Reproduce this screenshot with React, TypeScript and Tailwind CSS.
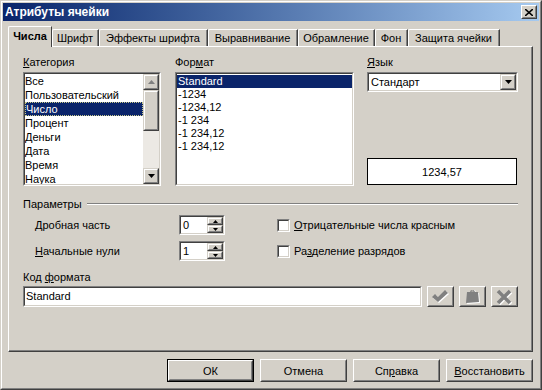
import React from 'react';

const cats = ['Все', 'Пользовательский', 'Число', 'Процент', 'Деньги', 'Дата', 'Время', 'Наука'];
const formats = ['Standard', '-1234', '-1234,12', '-1 234', '-1 234,12', '-1 234,12'];
const tabs = [
  { name: 'Числа', w: 'w-[44px]' },
  { name: 'Шрифт', w: 'w-[47px]' },
  { name: 'Эффекты шрифта', w: 'w-[109px]' },
  { name: 'Выравнивание', w: 'w-[90px]' },
  { name: 'Обрамление', w: 'w-[77px]' },
  { name: 'Фон', w: 'w-[33px]' },
  { name: 'Защита ячейки', w: 'w-[92px]' },
];

function Raised({ className = '', children }: { className?: string; children?: React.ReactNode }) {
  return (
    <div className={`border border-t-white border-l-white border-r-[#404040] border-b-[#404040] bg-[#d4d0c8] ${className}`}>
      <div className="w-full h-full border border-t-[#d4d0c8] border-l-[#d4d0c8] border-r-[#808080] border-b-[#808080] flex items-center justify-center">
        {children}
      </div>
    </div>
  );
}

function ScrollBtn({ className = '', children }: { className?: string; children?: React.ReactNode }) {
  return (
    <div className={`border border-t-[#d4d0c8] border-l-[#d4d0c8] border-r-[#404040] border-b-[#404040] bg-[#d4d0c8] ${className}`}>
      <div className="w-full h-full border border-t-white border-l-white border-r-[#808080] border-b-[#808080] flex items-center justify-center">
        {children}
      </div>
    </div>
  );
}

function Sunken({ className = '', inner = '', children }: { className?: string; inner?: string; children?: React.ReactNode }) {
  return (
    <div className={`border border-t-[#808080] border-l-[#808080] border-r-white border-b-white ${className}`}>
      <div className={`w-full h-full border border-t-[#404040] border-l-[#404040] border-r-[#d4d0c8] border-b-[#d4d0c8] bg-white ${inner}`}>
        {children}
      </div>
    </div>
  );
}

function Arrow({ up, color = '#000', small }: { up?: boolean; color?: string; small?: boolean }) {
  const w = small ? 5 : 7;
  const h = small ? 3 : 4;
  const pts = up ? `0,${h} ${w},${h} ${w / 2},0` : `0,0 ${w},0 ${w / 2},${h}`;
  return (
    <svg width={w} height={h} viewBox={`0 0 ${w} ${h}`}>
      <polygon points={pts} fill={color} />
    </svg>
  );
}

function Spin({ value }: { value: string }) {
  return (
    <Sunken className="w-[46px] h-[20px]" inner="flex">
      <div className="flex-1 pl-[2px] leading-[16px]">{value}</div>
      <div className="w-[16px] flex flex-col">
        <ScrollBtn className="h-[8px]">
          <Arrow up small />
        </ScrollBtn>
        <ScrollBtn className="h-[8px]">
          <Arrow small />
        </ScrollBtn>
      </div>
    </Sunken>
  );
}

function Check({ label }: { label: React.ReactNode }) {
  return (
    <div className="flex items-center gap-[4px]">
      <Sunken className="w-[13px] h-[13px]" />
      <span>{label}</span>
    </div>
  );
}

export default function App() {
  return (
    <div className="w-[542px] h-[390px] border border-t-[#d4d0c8] border-l-[#d4d0c8] border-r-[#404040] border-b-[#404040] bg-[#d4d0c8] text-[11px] leading-[14px] text-black font-['Liberation_Sans',Arial,sans-serif]">
      <div className="w-full h-full border border-t-white border-l-white border-r-[#808080] border-b-[#808080] p-[1px] flex flex-col">
        {/* title bar */}
        <div className="h-[18px] bg-linear-to-r from-[#0a246a] to-[#a6caf0] flex items-center justify-between pl-[2px] pr-[2px]">
          <span className="text-white font-bold text-[12px]">Атрибуты ячейки</span>
          <Raised className="w-[16px] h-[14px]">
            <svg width="8" height="7" viewBox="0 0 8 7">
              <path d="M0 0 L8 7 M8 0 L0 7" stroke="#000" strokeWidth="1.6" />
            </svg>
          </Raised>
        </div>

        <div className="flex-1 pl-[5px] pr-[5px] pt-[5px] flex flex-col">
          {/* tabs */}
          <div className="h-[20px] flex items-end">
            {tabs.map((t, i) =>
              i === 0 ? (
                <div
                  key={t.name}
                  className={`${t.w} h-[21px] -mb-[1px] relative z-10 bg-[#d4d0c8] border-t border-l border-r border-t-white border-l-white border-r-[#404040] rounded-tl-[2px] flex items-center justify-center font-bold pb-[2px]`}
                >
                  {t.name}
                </div>
              ) : (
                <div
                  key={t.name}
                  className={`${t.w} h-[17px] border-t border-l border-r border-t-white border-l-white border-r-[#404040] rounded-tl-[2px] flex items-center justify-center`}
                >
                  <div className="w-full h-full border-r border-r-[#808080] flex items-center justify-center">{t.name}</div>
                </div>
              )
            )}
          </div>

          {/* panel */}
          <div className="w-[525px] h-[306px] border border-t-white border-l-white border-r-[#404040] border-b-[#404040]">
            <div className="w-full h-full border-r border-b border-r-[#808080] border-b-[#808080] pl-[14px] pt-[8px]">
              <div className="flex">
                <div className="w-[138px]">
                  <div className="h-[14px] mb-[3px]">
                    <u>К</u>атегория
                  </div>
                  <Sunken className="w-[138px] h-[114px]" inner="flex">
                    <div className="flex-1 overflow-hidden">
                      {cats.map((c) => (
                        <div
                          key={c}
                          className={c === 'Число' ? 'h-[14px] leading-[12px] bg-[#0a246a] text-white border border-dotted border-[#c8c88a]' : 'h-[14px] leading-[14px]'}
                        >
                          {c}
                        </div>
                      ))}
                    </div>
                    <div className="w-[16px] flex flex-col bg-[#ece9e4]">
                      <ScrollBtn className="h-[16px]">
                        <Arrow up color="#808080" />
                      </ScrollBtn>
                      <ScrollBtn className="h-[41px]" />
                      <div className="flex-1" />
                      <ScrollBtn className="h-[16px]">
                        <Arrow />
                      </ScrollBtn>
                    </div>
                  </Sunken>
                </div>

                <div className="w-[179px] ml-[14px]">
                  <div className="h-[14px] mb-[3px]">
                    Фор<u>м</u>ат
                  </div>
                  <Sunken className="w-[179px] h-[114px]" inner="overflow-hidden pt-[1px]">
                    {formats.map((f, i) => (
                      <div
                        key={i}
                        className={i === 0 ? 'h-[13px] leading-[13px] pl-[1px] bg-[#0a246a] text-white' : 'h-[13px] leading-[13px] pl-[1px]'}
                      >
                        {f}
                      </div>
                    ))}
                  </Sunken>
                </div>

                <div className="w-[151px] ml-[13px]">
                  <div className="h-[14px] mb-[3px]">
                    <u>Я</u>зык
                  </div>
                  <Sunken className="w-[151px] h-[20px]" inner="flex">
                    <div className="flex-1 pl-[2px] leading-[16px]">Стандарт</div>
                    <ScrollBtn className="w-[16px] h-[16px]">
                      <Arrow />
                    </ScrollBtn>
                  </Sunken>
                  <div className="mt-[66px] w-[150px] h-[27px] border border-black bg-white flex items-center justify-center">
                    1234,57
                  </div>
                </div>
              </div>

              {/* parameters */}
              <div className="mt-[11px] w-[495px] h-[14px] flex items-center gap-[5px]">
                <span>Параметры</span>
                <div className="flex-1 border-t border-b border-t-[#808080] border-b-white" />
              </div>

              <div className="mt-[4px] h-[20px] flex items-center">
                <div className="w-[156px] pl-[12px]">
                  <u>Д</u>робная часть
                </div>
                <Spin value="0" />
                <div className="ml-[52px]">
                  <Check label={<><u>О</u>трицательные числа красным</>} />
                </div>
              </div>
              <div className="mt-[6px] h-[20px] flex items-center">
                <div className="w-[156px] pl-[12px]">
                  <u>Н</u>ачальные нули
                </div>
                <Spin value="1" />
                <div className="ml-[52px]">
                  <Check label={<>Ра<u>з</u>деление разрядов</>} />
                </div>
              </div>

              <div className="mt-[9px] h-[14px]">
                Код <u>ф</u>ормата
              </div>
              <div className="mt-[2px] flex items-center gap-[5px]">
                <Sunken className="w-[399px] h-[21px]">
                  <div className="pl-[1px] leading-[17px]">Standard</div>
                </Sunken>
                <Raised className="w-[27px] h-[21px]">
                  <svg width="19" height="15" viewBox="0 0 19 15">
                    <path d="M2 9 L5 6 L8 9 L15 2 L18 5 L8 14 Z" fill="#fff" />
                    <path d="M1 8 L4 5 L7 8 L14 1 L17 4 L7 13 Z" fill="#808080" />
                  </svg>
                </Raised>
                <Raised className="w-[27px] h-[21px]">
                  <svg width="17" height="16" viewBox="0 0 17 16">
                    <path d="M4 4 L7 4 L8 1 L11 1 L12 4 L15 4 L16 14 L3 15 Z" fill="#fff" />
                    <path d="M3 3 L6 3 L7 1 L10 1 L11 3 L14 3 L15 13 L2 14 Z" fill="#808080" />
                    <path d="M7.5 2 L9.5 2" stroke="#d4d0c8" strokeWidth="1" />
                  </svg>
                </Raised>
                <Raised className="w-[27px] h-[21px]">
                  <svg width="17" height="16" viewBox="0 0 17 16">
                    <path d="M3 3 L15 15 M15 3 L3 15" stroke="#fff" strokeWidth="3.6" />
                    <path d="M2 2 L14 14 M14 2 L2 14" stroke="#808080" strokeWidth="3.6" />
                  </svg>
                </Raised>
              </div>
            </div>
          </div>

          {/* buttons */}
          <div className="mt-[7px] w-[525px] flex justify-end gap-[6px]">
            <div className="w-[87px] h-[23px] border border-black">
              <Raised className="w-full h-full">ОК</Raised>
            </div>
            <Raised className="w-[87px] h-[23px]">Отмена</Raised>
            <Raised className="w-[87px] h-[23px]">
              <span>
                Сп<u>р</u>авка
              </span>
            </Raised>
            <Raised className="w-[87px] h-[23px]">
              <span>
                <u>В</u>осстановить
              </span>
            </Raised>
          </div>
        </div>
      </div>
    </div>
  );
}
